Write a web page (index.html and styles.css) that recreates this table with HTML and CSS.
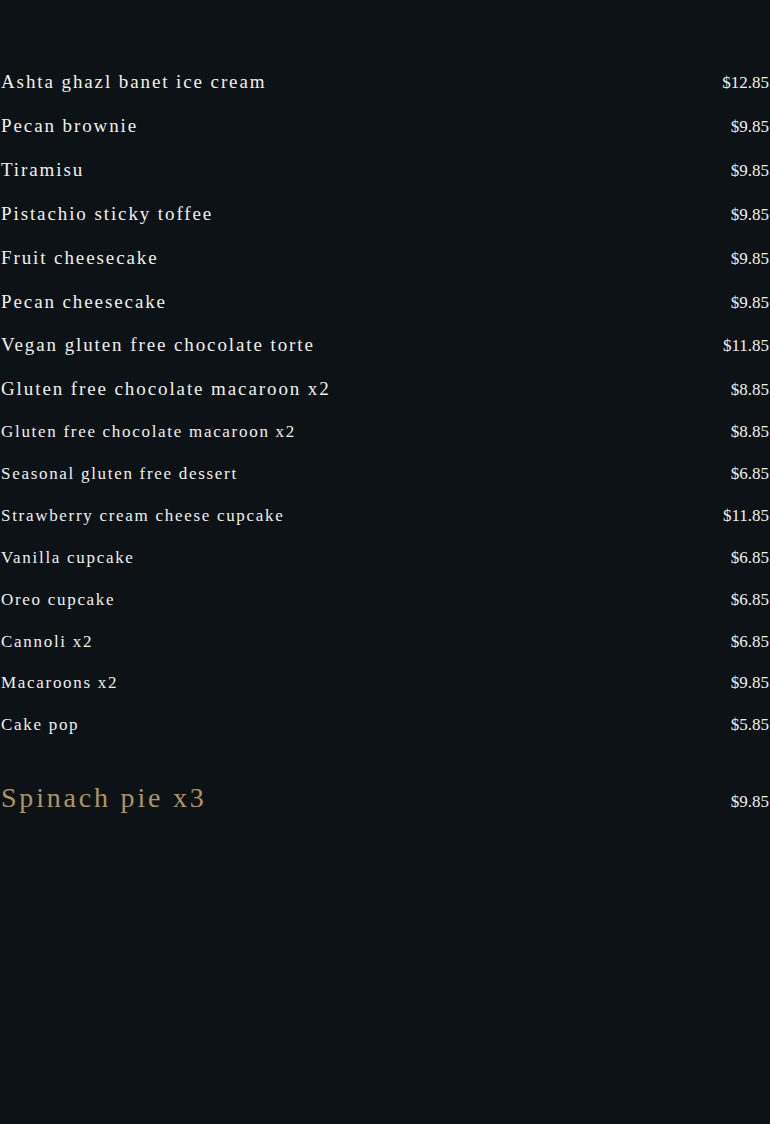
FILE: index.html
```html
<!DOCTYPE html>
<html lang="en">
<head>
<meta charset="utf-8">
<title>Desserts</title>
<link rel="stylesheet" href="styles.css">
</head>
<body>
<main class="menu">
  <ul class="list list-lg">
    <li class="row"><span class="name">Ashta ghazl banet ice cream</span><span class="price">$12.85</span></li>
    <li class="row"><span class="name">Pecan brownie</span><span class="price">$9.85</span></li>
    <li class="row"><span class="name">Tiramisu</span><span class="price">$9.85</span></li>
    <li class="row"><span class="name">Pistachio sticky toffee</span><span class="price">$9.85</span></li>
    <li class="row"><span class="name">Fruit cheesecake</span><span class="price">$9.85</span></li>
    <li class="row"><span class="name">Pecan cheesecake</span><span class="price">$9.85</span></li>
    <li class="row"><span class="name">Vegan gluten free chocolate torte</span><span class="price">$11.85</span></li>
    <li class="row"><span class="name">Gluten free chocolate macaroon x2</span><span class="price">$8.85</span></li>
  </ul>
  <ul class="list list-sm">
    <li class="row"><span class="name">Gluten free chocolate macaroon x2</span><span class="price">$8.85</span></li>
    <li class="row"><span class="name">Seasonal gluten free dessert</span><span class="price">$6.85</span></li>
    <li class="row"><span class="name">Strawberry cream cheese cupcake</span><span class="price">$11.85</span></li>
    <li class="row"><span class="name">Vanilla cupcake</span><span class="price">$6.85</span></li>
    <li class="row"><span class="name">Oreo cupcake</span><span class="price">$6.85</span></li>
    <li class="row"><span class="name">Cannoli x2</span><span class="price">$6.85</span></li>
    <li class="row"><span class="name">Macaroons x2</span><span class="price">$9.85</span></li>
    <li class="row"><span class="name">Cake pop</span><span class="price">$5.85</span></li>
  </ul>
  <ul class="list list-feature">
    <li class="row"><span class="name">Spinach pie x3</span><span class="price">$9.85</span></li>
  </ul>
</main>
</body>
</html>
```
FILE: styles.css
```css
html, body {
  margin: 0;
  padding: 0;
  background: #0c1215;
}
body {
  font-family: "Liberation Serif", "Times New Roman", serif;
  color: #f0f0ee;
  min-height: 1124px;
}
.menu {
  padding: 60px 1px 0 1px;
}
.list {
  list-style: none;
  margin: 0;
  padding: 0;
}
.row {
  display: flex;
  justify-content: space-between;
  align-items: baseline;
  padding: 11px 0;
}
.price {
  font-size: 17px;
  line-height: 19px;
  color: #f0f0ee;
}
.list-lg .name {
  font-size: 19px;
  letter-spacing: 1.9px;
  line-height: 21.9px;
}
.list-sm .name {
  font-size: 17px;
  letter-spacing: 1.7px;
  line-height: 19.86px;
}
.list-feature {
  margin-top: 25px;
}
.list-feature .name {
  font-size: 28px;
  letter-spacing: 2.8px;
  color: #ad9664;
}
```
